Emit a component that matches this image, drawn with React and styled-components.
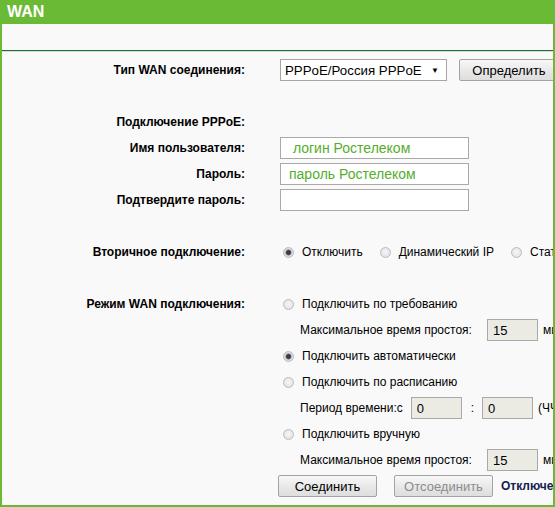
import React from "react";
import styled, { createGlobalStyle } from "styled-components";

const Global = createGlobalStyle`
  html, body { margin: 0; padding: 0; background: #fff; }
  body { font-family: "Liberation Sans", Arial, sans-serif; color: #000; }
  * { box-sizing: border-box; }
`;

const Frame = styled.div`
  width: 555px;
  height: 507px;
  border: 2px solid #6bba35;
  border-top: 0;
  background: #f9f9f9;
  overflow: hidden;
`;

const Header = styled.div`
  height: 24px;
  line-height: 24px;
  margin: 0 -2px;
  padding-left: 7px;
  background: #6bba35;
  color: #fff;
  font-weight: bold;
  font-size: 16px;
`;

const SubBar = styled.div`
  height: 27px;
  border-bottom: 1px solid #1d6b3a;
  box-shadow: 0 1px 0 #d3ddd5;
`;

const Form = styled.div`
  padding-top: 6px;
`;

const Row = styled.div`
  display: grid;
  grid-template-columns: 243px minmax(0, 1fr);
  column-gap: 35px;
  height: 26px;
  align-items: center;
`;

const Label = styled.div`
  text-align: right;
  font-weight: bold;
  font-size: 12px;
  white-space: nowrap;
`;

const Value = styled.div`
  display: flex;
  align-items: center;
  white-space: nowrap;
  font-size: 12px;
  margin-left: ${(p) => (p.$shift ? `${p.$shift}px` : "0")};
  & > * { flex-shrink: 0; }
`;

const SelectBox = styled.div`
  width: 167px;
  height: 22px;
  border: 1px solid #a5a5a5;
  background: #fff;
  display: flex;
  align-items: center;
  justify-content: space-between;
  padding: 0 7px 0 4px;
  font-size: 13.3px;
`;

const Arrow = styled.span`
  font-size: 8px;
`;

const Button = styled.button`
  width: ${(p) => p.$w || 99}px;
  height: 22px;
  margin-left: ${(p) => p.$ml || 0}px;
  border: 1px solid #a3a3a3;
  border-radius: 2px;
  background: linear-gradient(#f8f8f8, #e6e6e6 60%, #dedede);
  font-family: "Liberation Sans", Arial, sans-serif;
  font-size: 13px;
  color: ${(p) => (p.disabled ? "#8c8c8c" : "#000")};
  padding: 0;
`;

const TextInput = styled.input`
  width: 189px;
  height: 22px;
  border: 1px solid #a9a9a9;
  background: #fff;
  padding: 0 0 0 8px;
  font-family: "Liberation Sans", Arial, sans-serif;
  font-size: 14px;
  color: #55ad2c;
  outline: none;
`;

const SmallInput = styled.input`
  width: 51px;
  height: 22px;
  border: 1px solid #a9a9a9;
  background: #ebebe4;
  padding: 0 0 0 5px;
  font-family: "Liberation Sans", Arial, sans-serif;
  font-size: 13px;
  color: #000;
  margin-left: ${(p) => p.$ml || 0}px;
  margin-right: ${(p) => p.$mr || 0}px;
`;

const Radio = styled.input.attrs({ type: "radio", readOnly: true })`
  appearance: none;
  -webkit-appearance: none;
  width: 11px;
  height: 11px;
  margin: 0 8px 0 3px;
  border-radius: 50%;
  border: 1px solid #bcbcbc;
  background: radial-gradient(circle at 50% 45%, #f7f7f7, #dcdcdc);
  &:checked {
    background: radial-gradient(circle, #3e3b4c 0 2px, #7c7b84 2.6px, #dedede 3.4px, #d4d4d4);
  }
`;

const Option = styled.label`
  display: flex;
  align-items: center;
  margin-right: 14px;
  font-size: 12px;
`;

const Colon = styled.span`
  margin: 0 8px 0 9px;
`;

const Status = styled.span`
  margin-left: 8px;
  font-weight: bold;
  font-size: 12px;
  color: #13214f;
`;

export default function App() {
  return (
    <>
      <Global />
      <Frame>
        <Header>WAN</Header>
        <SubBar />
        <Form>
          <Row>
            <Label>Тип WAN соединения:</Label>
            <Value>
              <SelectBox>
                <span>PPPoE/Россия PPPoE</span>
                <Arrow>▼</Arrow>
              </SelectBox>
              <Button $ml={12} $w={100}>Определить</Button>
            </Value>
          </Row>
          <Row />
          <Row>
            <Label>Подключение PPPoE:</Label>
          </Row>
          <Row>
            <Label>Имя пользователя:</Label>
            <Value>
              <TextInput readOnly value=" логин Ростелеком" />
            </Value>
          </Row>
          <Row>
            <Label>Пароль:</Label>
            <Value>
              <TextInput readOnly value="пароль Ростелеком" />
            </Value>
          </Row>
          <Row>
            <Label>Подтвердите пароль:</Label>
            <Value>
              <TextInput readOnly value="" />
            </Value>
          </Row>
          <Row />
          <Row>
            <Label>Вторичное подключение:</Label>
            <Value>
              <Option><Radio name="sec" checked />Отключить</Option>
              <Option><Radio name="sec" />Динамический IP</Option>
              <Option><Radio name="sec" />Статический IP</Option>
            </Value>
          </Row>
          <Row />
          <Row>
            <Label>Режим WAN подключения:</Label>
            <Value>
              <Option><Radio name="mode" />Подключить по требованию</Option>
            </Value>
          </Row>
          <Row>
            <Label />
            <Value $shift={20}>
              <span>Максимальное время простоя:</span>
              <SmallInput disabled value="15" readOnly $ml={15} $mr={5} />
              <span>минут</span>
            </Value>
          </Row>
          <Row>
            <Label />
            <Value>
              <Option><Radio name="mode" checked />Подключить автоматически</Option>
            </Value>
          </Row>
          <Row>
            <Label />
            <Value>
              <Option><Radio name="mode" />Подключить по расписанию</Option>
            </Value>
          </Row>
          <Row>
            <Label />
            <Value $shift={20}>
              <span>Период времени:с</span>
              <SmallInput disabled value="0" readOnly $ml={8} />
              <Colon>:</Colon>
              <SmallInput disabled value="0" readOnly $mr={5} />
              <span>(ЧЧ:ММ)</span>
            </Value>
          </Row>
          <Row>
            <Label />
            <Value>
              <Option><Radio name="mode" />Подключить вручную</Option>
            </Value>
          </Row>
          <Row>
            <Label />
            <Value $shift={20}>
              <span>Максимальное время простоя:</span>
              <SmallInput disabled value="15" readOnly $ml={15} $mr={5} />
              <span>минут</span>
            </Value>
          </Row>
          <Row>
            <Label />
            <Value $shift={-2}>
              <Button>Соединить</Button>
              <Button disabled $ml={17}>Отсоединить</Button>
              <Status>Отключено</Status>
            </Value>
          </Row>
        </Form>
      </Frame>
    </>
  );
}
